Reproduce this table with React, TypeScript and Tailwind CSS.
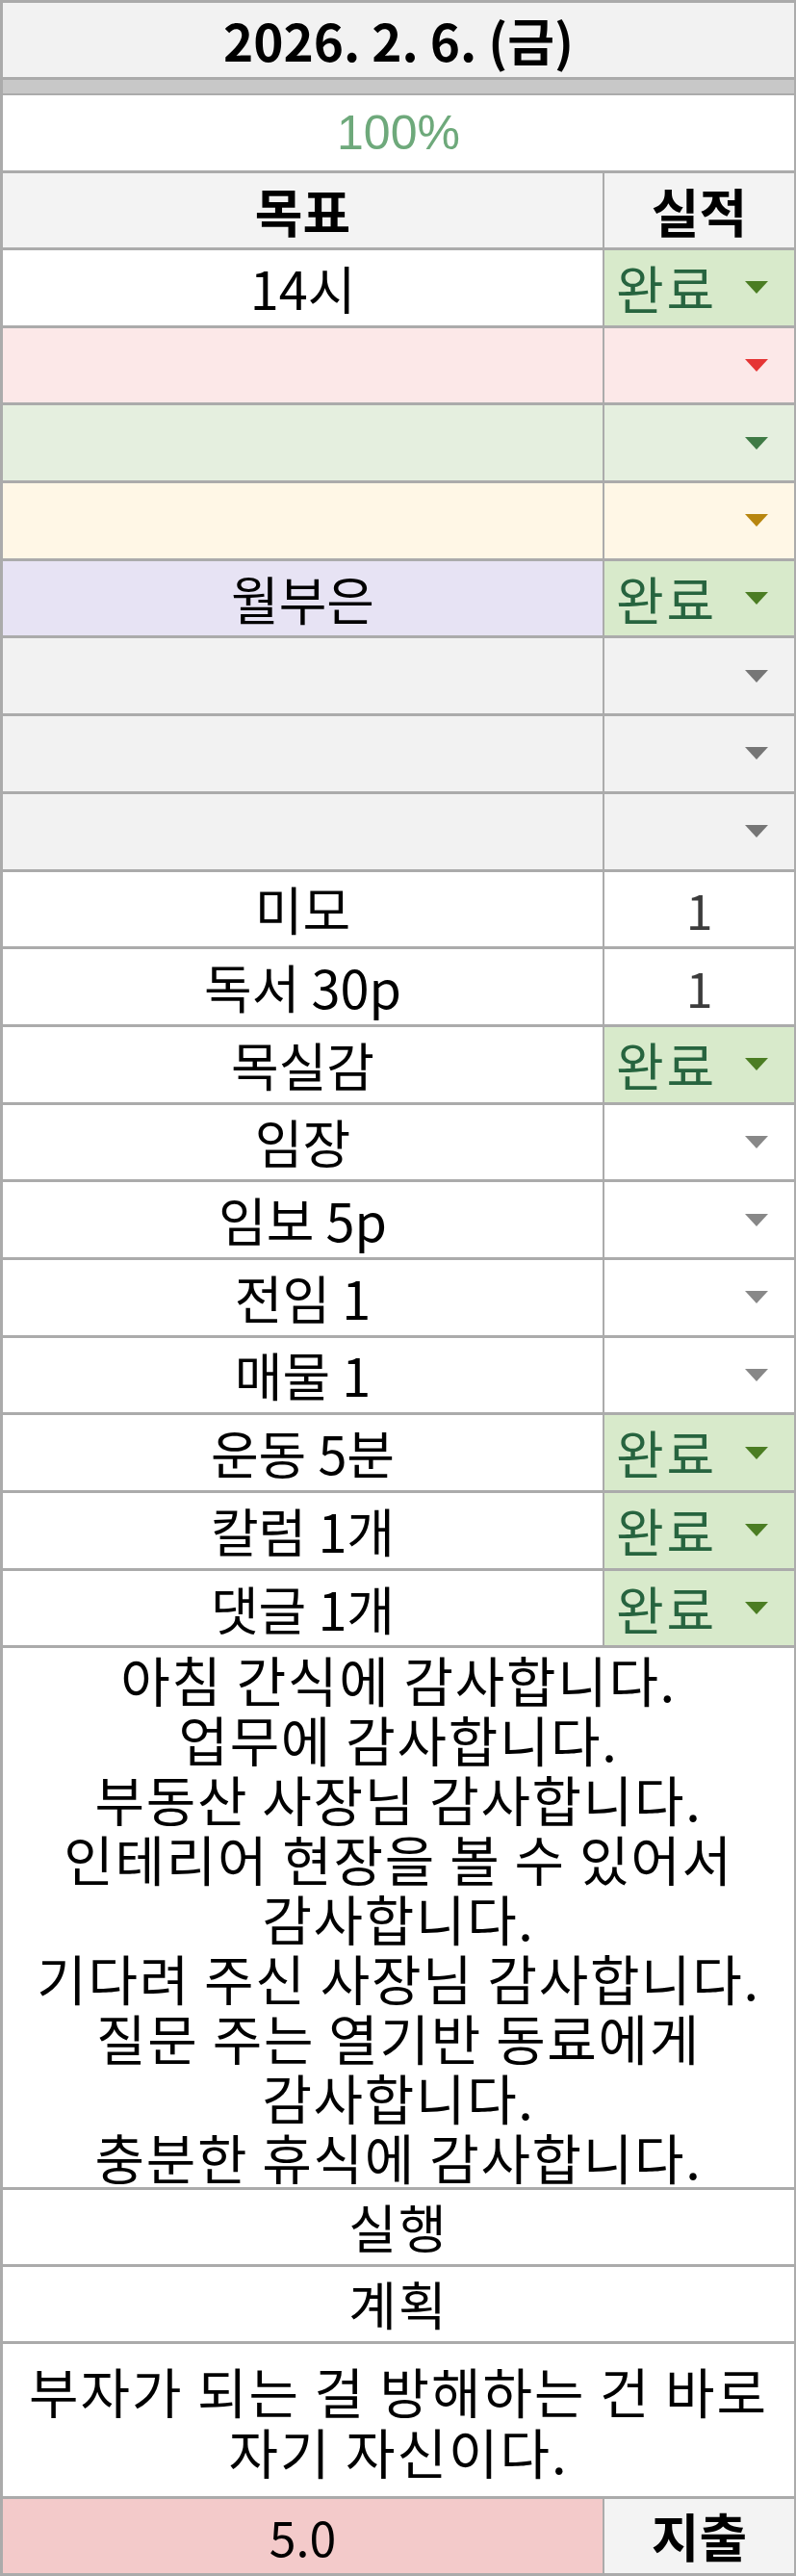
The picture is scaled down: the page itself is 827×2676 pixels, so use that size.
import React from "react";

type Row = {
  label?: string;
  leftBg: string;
  rightBg: string;
  value?: "done" | "one" | "none";
  arrow?: string;
};

const Arrow = ({ color }: { color: string }) => (
  <svg width="24" height="13" viewBox="0 0 24 13" className="shrink-0">
    <polygon points="0,0 24,0 12,13" fill={color} />
  </svg>
);

const G = "bg-[#d8eacb]";

const rows: Row[] = [
  { label: "14시", leftBg: "bg-white", rightBg: G, value: "done", arrow: "#4b7d23" },
  { leftBg: "bg-[#fce8e8]", rightBg: "bg-[#fce8e8]", value: "none", arrow: "#e53535" },
  { leftBg: "bg-[#e5efdf]", rightBg: "bg-[#e5efdf]", value: "none", arrow: "#3f7a45" },
  { leftBg: "bg-[#fff7e6]", rightBg: "bg-[#fff7e6]", value: "none", arrow: "#b8860f" },
  { label: "월부은", leftBg: "bg-[#e7e3f4]", rightBg: G, value: "done", arrow: "#4b7d23" },
  { leftBg: "bg-[#f2f2f2]", rightBg: "bg-[#f2f2f2]", value: "none", arrow: "#767676" },
  { leftBg: "bg-[#f2f2f2]", rightBg: "bg-[#f2f2f2]", value: "none", arrow: "#767676" },
  { leftBg: "bg-[#f2f2f2]", rightBg: "bg-[#f2f2f2]", value: "none", arrow: "#767676" },
  { label: "미모", leftBg: "bg-white", rightBg: "bg-white", value: "one" },
  { label: "독서 30p", leftBg: "bg-white", rightBg: "bg-white", value: "one" },
  { label: "목실감", leftBg: "bg-white", rightBg: G, value: "done", arrow: "#4b7d23" },
  { label: "임장", leftBg: "bg-white", rightBg: "bg-white", value: "none", arrow: "#888888" },
  { label: "임보 5p", leftBg: "bg-white", rightBg: "bg-white", value: "none", arrow: "#888888" },
  { label: "전임 1", leftBg: "bg-white", rightBg: "bg-white", value: "none", arrow: "#888888" },
  { label: "매물 1", leftBg: "bg-white", rightBg: "bg-white", value: "none", arrow: "#888888" },
  { label: "운동 5분", leftBg: "bg-white", rightBg: G, value: "done", arrow: "#4b7d23" },
  { label: "칼럼 1개", leftBg: "bg-white", rightBg: G, value: "done", arrow: "#4b7d23" },
  { label: "댓글 1개", leftBg: "bg-white", rightBg: G, value: "done", arrow: "#4b7d23" },
];

const gratitude = [
  "아침 간식에 감사합니다.",
  "업무에 감사합니다.",
  "부동산 사장님 감사합니다.",
  "인테리어 현장을 볼 수 있어서",
  "감사합니다.",
  "기다려 주신 사장님 감사합니다.",
  "질문 주는 열기반 동료에게",
  "감사합니다.",
  "충분한 휴식에 감사합니다.",
];

export default function App() {
  return (
    <div className="w-[827px] h-[2676px] bg-white border-[#ababab] border-t-[3px] border-l-[3px] border-r-[2px] border-b-[3px] font-['Noto_Sans_CJK_KR','Noto_Sans',sans-serif] text-[54px] text-black leading-none overflow-hidden">
      {/* title */}
      <div className="h-[77px] bg-[#f2f2f2] border-b-[3px] border-[#ababab] box-content flex items-center justify-center font-bold text-[53px]">
        2026. 2. 6. (금)
      </div>
      <div className="h-[14px] bg-[#c8c8c8] border-b-[2px] border-[#ababab] box-content" />
      <div className="h-[78px] bg-white border-b-[3px] border-[#ababab] box-content flex items-center justify-center font-['Liberation_Sans',sans-serif] text-[#6ea97b] text-[50px]">
        100%
      </div>
      {/* header */}
      <div className="h-[77px] border-b-[3px] border-[#ababab] box-content flex font-bold">
        <div className="w-[623px] bg-[#f3f3f3] flex items-center justify-center">목표</div>
        <div className="flex-1 bg-[#f3f3f3] border-l-[2px] border-[#ababab] flex items-center justify-center">실적</div>
      </div>
      {rows.map((r, i) => (
        <div key={i} className="h-[77.7px] border-b-[3px] border-[#ababab] box-content flex">
          <div className={`w-[623px] ${r.leftBg} flex items-center justify-center`}>{r.label ?? ""}</div>
          <div className={`flex-1 ${r.rightBg} border-l-[2px] border-[#ababab] flex items-center`}>
            {r.value === "done" && (
              <div className="w-full flex items-center justify-between pl-[12px] pr-[27px]">
                <span className="text-[#27643f] tracking-[0.05em]">완료</span>
                <Arrow color={r.arrow!} />
              </div>
            )}
            {r.value === "none" && (
              <div className="w-full flex items-center justify-end pr-[27px]">
                <Arrow color={r.arrow!} />
              </div>
            )}
            {r.value === "one" && (
              <div className="w-full text-center text-[#3c3c3c] text-[50px]">1</div>
            )}
          </div>
        </div>
      ))}
      {/* gratitude */}
      <div className="h-[559.4px] border-b-[3px] border-[#ababab] box-content flex flex-col items-center justify-center text-[56px] leading-[62px] tracking-[0.03em]">
        {gratitude.map((g, i) => (
          <div key={i} className="whitespace-nowrap">{g}</div>
        ))}
      </div>
      <div className="h-[77px] border-b-[3px] border-[#ababab] box-content flex items-center justify-center tracking-[0.04em]">실행</div>
      <div className="h-[77px] border-b-[3px] border-[#ababab] box-content flex items-center justify-center tracking-[0.04em]">계획</div>
      <div className="h-[158px] border-b-[3px] border-[#ababab] box-content flex flex-col items-center justify-center text-[56px] leading-[63px] tracking-[0.035em]">
        <div className="whitespace-nowrap">부자가 되는 걸 방해하는 건 바로</div>
        <div className="whitespace-nowrap">자기 자신이다.</div>
      </div>
      <div className="h-[77px] flex">
        <div className="w-[623px] bg-[#f3caca] flex items-center justify-center text-[50px]">5.0</div>
        <div className="flex-1 bg-[#f3f3f3] border-l-[2px] border-[#ababab] flex items-center justify-center font-bold">지출</div>
      </div>
    </div>
  );
}
